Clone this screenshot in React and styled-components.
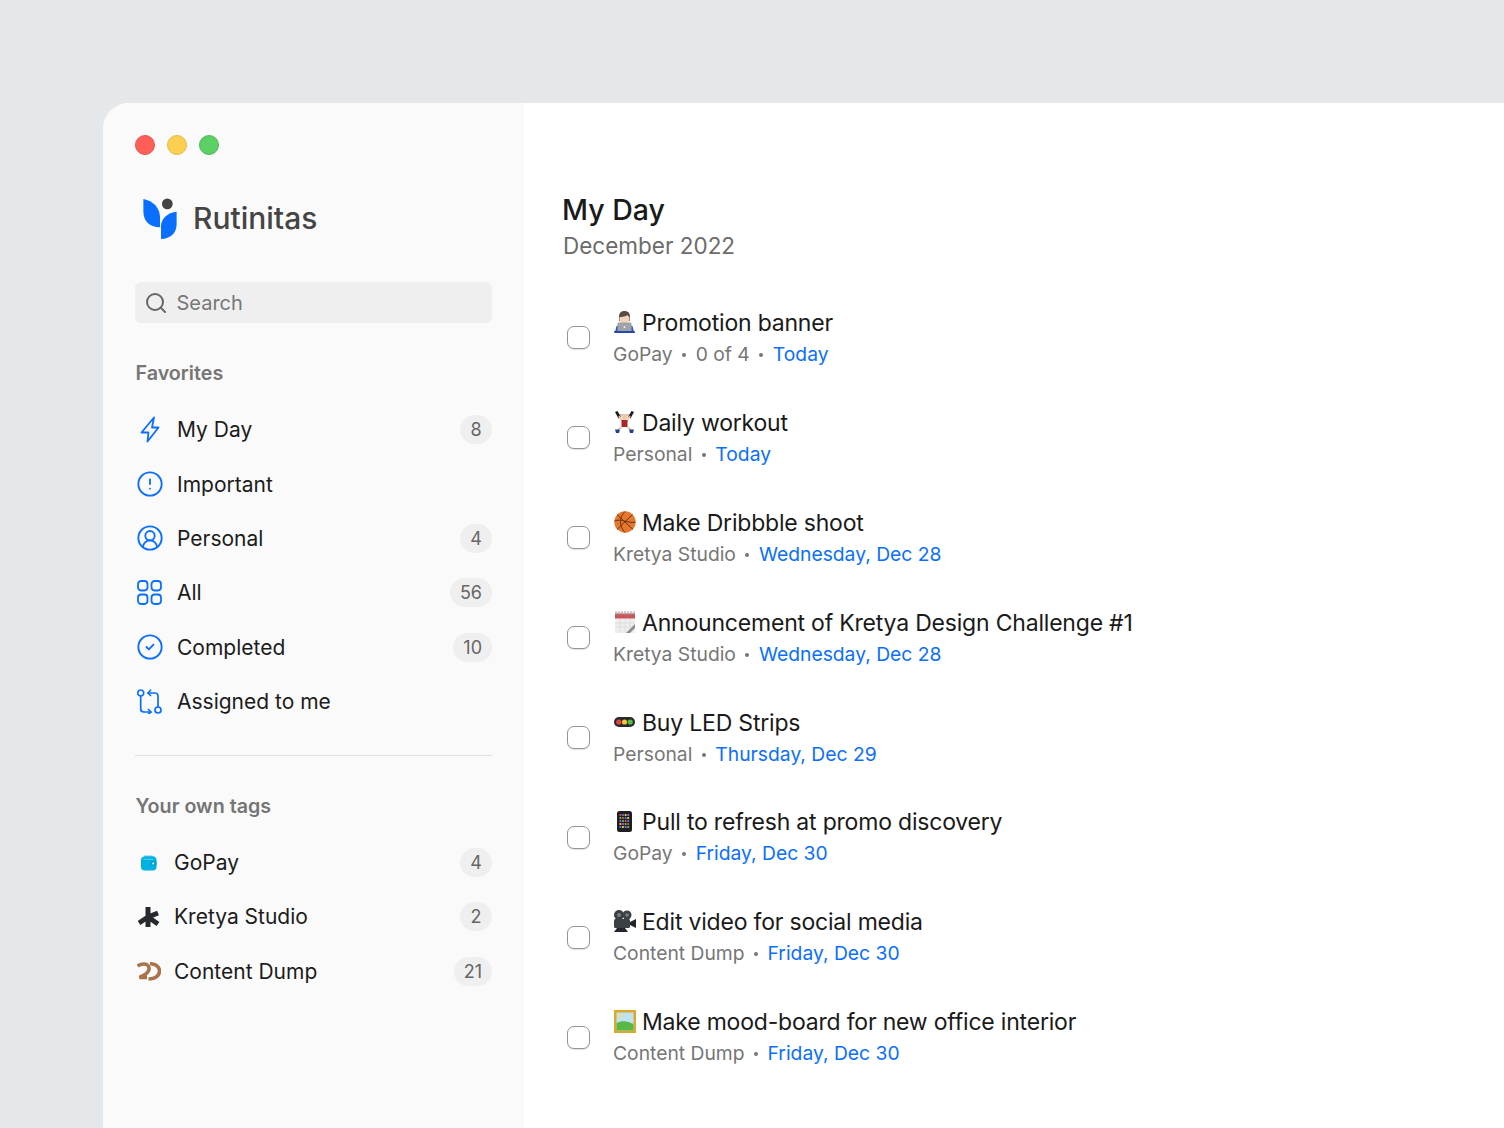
import React from "react";
import styled, { createGlobalStyle } from "styled-components";
import { Search, CircleAlert, CircleUserRound, CircleCheck } from "lucide-react";

const GlobalStyle = createGlobalStyle`
  html, body { margin: 0; padding: 0; }
  body {
    background: #e5e8eb;
    font-family: Inter, "Noto Sans", sans-serif;
    color: #1a1a1a;
    -webkit-font-smoothing: antialiased;
  }
`;

const Page = styled.div`
  width: 1504px;
  height: 1128px;
  overflow: hidden;
  padding: 103px 0 0 103px;
  box-sizing: border-box;
`;

const AppWindow = styled.div`
  display: flex;
  height: 1025px;
  background: #fff;
  border-top-left-radius: 26px;
  overflow: hidden;
`;

const Sidebar = styled.aside`
  width: 421px;
  flex: none;
  background: #fafafa;
  box-sizing: border-box;
  padding: 32px 32px 0 32px;
`;

const Lights = styled.div`
  display: flex;
  gap: 12px;
  height: 20px;
`;

const Light = styled.span`
  width: 20px;
  height: 20px;
  box-sizing: border-box;
  border-radius: 50%;
  background: ${(p) => p.$color};
  border: 1px solid ${(p) => p.$edge};
`;

const Brand = styled.div`
  display: flex;
  align-items: center;
  gap: 16px;
  margin: 40px 0 0 8px;
  height: 46px;
`;

const BrandName = styled.div`
  font-size: 30px;
  font-weight: 500;
  color: #444;
`;

const SearchBox = styled.div`
  display: flex;
  align-items: center;
  gap: 8.5px;
  height: 41px;
  margin-top: 41px;
  padding-left: 9px;
  background: #efefef;
  border-radius: 6px;
  font-size: 20px;
  color: #777;
  svg { color: #666; }
`;

const SectionLabel = styled.div`
  font-size: 19.7px;
  font-weight: 600;
  color: #757575;
  margin-top: ${(p) => p.$top}px;
  line-height: 24px;
  padding-left: 0.5px;
`;

const NavList = styled.div`
  display: flex;
  flex-direction: column;
  margin-top: ${(p) => p.$top}px;
`;

const NavRow = styled.div`
  display: flex;
  align-items: center;
  height: 54.4px;
`;

const NavIcon = styled.span`
  width: 28px;
  margin-right: 13.5px;
  margin-left: 0.5px;
  flex: none;
  display: flex;
  justify-content: center;
  color: #0a6fff;
`;

const TagIcon = styled(NavIcon)`
  width: 26px;
  margin-right: 12.5px;
`;

const NavText = styled.span`
  flex: 1;
  font-size: 21px;
  color: #1c1c1c;
`;

const Count = styled.span`
  min-width: 32px;
  height: 29px;
  padding: 0 10px;
  box-sizing: border-box;
  border-radius: 15px;
  background: #efefef;
  color: #666;
  font-size: 18px;
  display: flex;
  align-items: center;
  justify-content: center;
`;

const Divider = styled.hr`
  border: 0;
  height: 1px;
  background: #dfdfdf;
  margin: 26px 0 0;
`;

const Main = styled.main`
  flex: 1;
  padding: 90px 0 0 39px;
`;

const Title = styled.h1`
  margin: 0 0 0 -1px;
  font-size: 28.5px;
  line-height: 34px;
  font-weight: 500;
  color: #1a1a1a;
`;

const Subtitle = styled.div`
  margin-top: 4px;
  font-size: 22.5px;
  line-height: 30px;
  color: #6b6b6b;
`;

const TaskList = styled.div`
  display: flex;
  flex-direction: column;
  margin-top: 27px;
`;

const Task = styled.div`
  display: flex;
  align-items: center;
  height: 99.9px;
`;

const Box = styled.span`
  width: 23px;
  height: 23px;
  margin: 0 23px 0 4px;
  box-sizing: border-box;
  border: 1.5px solid #959595;
  border-radius: 7px;
  background: #fff;
  box-shadow: 0 1px 1px rgba(0, 0, 0, 0.12);
  flex: none;
`;

const TaskBody = styled.div`
  display: flex;
  flex-direction: column;
  gap: 2px;
`;

const TaskTitle = styled.div`
  display: flex;
  align-items: center;
  gap: 6px;
  font-size: 23px;
  letter-spacing: -0.2px;
  line-height: 30px;
  color: #1a1a1a;
`;

const Meta = styled.div`
  display: flex;
  align-items: center;
  font-size: 19.3px;
  line-height: 28px;
  color: #767676;
`;

const Dot = styled.span`
  width: 4px;
  height: 4px;
  border-radius: 50%;
  background: #767676;
  margin: 2px 9.5px 0;
`;

const Due = styled.span`
  color: #0a6fff;
`;

const EmojiSlot = styled.span`
  width: 23px;
  display: flex;
  justify-content: center;
  margin-top: -2px;
`;

const Logo = () => (
  <svg width="34" height="41" viewBox="0 0 34 42">
    <path d="M0 1C10 3 17 10 17 20V30C7 30 0 24 0 14Z" fill="#0a6fff" />
    <path d="M18 42V29C18 21 25 15 34 14V27C34 36 28 42 18 42Z" fill="#0a6fff" />
    <circle cx="24.5" cy="6" r="5.5" fill="#444" />
  </svg>
);

const BoltIcon = () => (
  <svg width="20" height="27" viewBox="0 0 20 27" fill="none" stroke="currentColor" strokeWidth="1.8" strokeLinejoin="round">
    <path d="M14 1.5L1.5 16.5H8.5L7.5 25.5L18.5 11.5H12Z" />
  </svg>
);

const GridIcon = () => (
  <svg width="25" height="25" viewBox="0 0 25 25" fill="none" stroke="currentColor" strokeWidth="1.8">
    <rect x="1" y="1" width="9.5" height="9.5" rx="3.2" />
    <rect x="14.5" y="1" width="9.5" height="9.5" rx="3.2" />
    <rect x="1" y="14.5" width="9.5" height="9.5" rx="3.2" />
    <rect x="14.5" y="14.5" width="9.5" height="9.5" rx="3.2" />
  </svg>
);

const AssignIcon = () => (
  <svg width="25" height="25" viewBox="0 0 25 25" fill="none" stroke="currentColor" strokeWidth="1.7" strokeLinecap="round" strokeLinejoin="round">
    <circle cx="3.7" cy="4" r="3" />
    <circle cx="21" cy="21" r="3" />
    <path d="M3.7 7V20C3.7 22 5 23 7 23H14" />
    <path d="M11.5 20.5L14 23L11.5 25" />
    <path d="M21 18V7C21 5 19.7 4 18 4H11" />
    <path d="M13.5 1.2L11 4L13.5 6.5" />
  </svg>
);

const WalletIcon = () => (
  <svg width="16" height="16" viewBox="0 0 17 16">
    <path d="M3.5 0H11C13 0 14 1 14 2.5H3Z" fill="#5cc9ea" />
    <rect x="0" y="1" width="16.5" height="15" rx="4" fill="#00b2e3" />
    <path d="M2.5 4H13" stroke="#7fd6ef" strokeWidth="0.8" />
    <rect x="10.5" y="6" width="6" height="5" rx="1.5" fill="#009fcf" />
    <circle cx="13" cy="8.5" r="1" fill="#fff" />
  </svg>
);

const StudioIcon = () => (
  <svg width="22" height="22" viewBox="0 0 22 22" fill="none" stroke="#262a2e" strokeWidth="5">
    <path d="M10 1V21M10 11L1 17M10 11L20 7M10 11L20 18" />
  </svg>
);

const DumpIcon = () => (
  <svg width="24" height="19" viewBox="0 0 24 19" fill="none" stroke="#a9734c" strokeWidth="3.6">
    <path d="M0.5 4C2.5 2.5 5 2 7 2C10.5 2 12.5 4.5 12 7.5C11.5 11 7 13.5 2.5 15.5H10" />
    <path d="M13 1.8C19 1.5 22.5 5 22.5 9C22.5 13.5 18.5 17 11.5 17" />
  </svg>
);

const LaptopEmoji = () => (
  <svg width="21" height="22" viewBox="0 0 21 22">
    <path d="M5 6C5 2 7 0 10.5 0C14 0 16 2 16 6V10H5Z" fill="#5a4a42" />
    <path d="M5.5 6C8 6 12 5.5 13.5 4C14 5 15 6 15.5 6V8.5C15.5 11.5 13 13 10.5 13C8 13 5.5 11.5 5.5 8.5Z" fill="#f3d3bd" />
    <path d="M1 21L2.5 15C5 13.5 16 13.5 18.5 15L20 21Z" fill="#3056c9" />
    <rect x="3.5" y="11.5" width="14" height="9.5" rx="1" fill="#9fa3a8" />
    <rect x="0" y="20" width="21" height="2" rx="1" fill="#2747ad" />
    <circle cx="10.5" cy="16" r="1" fill="#eee" />
  </svg>
);

const WorkoutEmoji = () => (
  <svg width="21" height="22" viewBox="0 0 21 22">
    <path d="M4 4L17 4" stroke="#888" strokeWidth="1" />
    <path d="M1 1L3.5 0L7 6L4.5 7.5ZM20 1L17.5 0L14 6L16.5 7.5Z" fill="#1d1d1d" />
    <circle cx="10.5" cy="6" r="3" fill="#f0c6a4" />
    <path d="M5 5L8 10H13L16 5" stroke="#f0c6a4" strokeWidth="1.6" fill="none" />
    <rect x="7.5" y="9" width="6" height="7" fill="#a8262b" />
    <path d="M8 16L4 18.5M13 16L17 18.5" stroke="#f0c6a4" strokeWidth="2" />
    <path d="M1 18.5H6L5 22H2ZM15 18.5H20L19 22H16Z" fill="#24408c" />
  </svg>
);

const BallEmoji = () => (
  <svg width="22" height="22" viewBox="0 0 22 22" fill="none">
    <circle cx="11" cy="11" r="10.7" fill="#e4782c" />
    <g stroke="#6e3414" strokeWidth="1">
      <path d="M3 3.5L19 18.5M18.5 3.5L3 18.5" />
      <path d="M11 .5C5 6 5 15 11 21.5M.5 10C7 7 15 13 21.5 11" />
    </g>
  </svg>
);

const CalendarEmoji = () => (
  <svg width="20" height="22" viewBox="0 0 20 22">
    <rect x="0" y="1" width="20" height="21" fill="#eeeeee" />
    <rect x="0" y="2.5" width="20" height="5" fill="#c8575b" />
    <path d="M1 0V4M4 0V4M7 0V4M10 0V4M13 0V4M16 0V4M19 0V4" stroke="#a5a5a5" strokeWidth="1" />
    <path d="M0 12H20M0 16H20M5 8V22M10 8V22M15 8V22" stroke="#dedede" strokeWidth="1" />
    <path d="M11 22L20 13V17L15 22Z" fill="#8d8d8d" />
  </svg>
);

const LedEmoji = () => (
  <svg width="21" height="10" viewBox="0 0 21 10">
    <rect x="0" y="0" width="21" height="10" rx="5" fill="#2a2a2a" />
    <circle cx="4.8" cy="5" r="2.6" fill="#e9453f" />
    <circle cx="10.5" cy="5" r="2.6" fill="#f4c431" />
    <circle cx="16.2" cy="5" r="2.6" fill="#52c146" />
  </svg>
);

const PhoneEmoji = () => {
  const colors = ["#e9453f", "#f4c431", "#52c146", "#3b82f6", "#a855f7"];
  return (
    <svg width="15" height="21" viewBox="0 0 15 21">
      <rect x="0" y="0" width="15" height="21" rx="2.5" fill="#1f1f1f" />
      {Array.from({ length: 20 }).map((_, i) => (
        <rect
          key={i}
          x={2.5 + (i % 4) * 2.6}
          y={3 + Math.floor(i / 4) * 3}
          width="1.8"
          height="2"
          fill={colors[(i * 3) % 5]}
        />
      ))}
    </svg>
  );
};

const CameraEmoji = () => (
  <svg width="23" height="22" viewBox="0 0 23 22" fill="#3b4045">
    <circle cx="6" cy="5" r="5" />
    <circle cx="14" cy="5" r="4.5" />
    <circle cx="6" cy="5" r="2" fill="#7b8085" />
    <circle cx="14" cy="5" r="1.8" fill="#7b8085" />
    <rect x="1" y="9" width="16" height="9" rx="1.5" />
    <path d="M17 12L23 9V18L17 15Z" fill="#23272b" />
    <path d="M4 18L1 22H15L12 18Z" fill="#23272b" />
  </svg>
);

const PictureEmoji = () => (
  <svg width="22" height="23" viewBox="0 0 22 23">
    <rect x="0" y="0" width="22" height="23" fill="#dca928" />
    <rect x="2.5" y="2.5" width="17" height="18" fill="#bfe3f5" />
    <path d="M2.5 13C8 10 14 11 19.5 14V20.5H2.5Z" fill="#58b947" />
    <circle cx="6" cy="6" r="1.8" fill="#f7e26b" />
  </svg>
);

const nav = [
  { icon: <BoltIcon />, label: "My Day", count: 8 },
  { icon: <CircleAlert size={28} strokeWidth={1.6} />, label: "Important" },
  { icon: <CircleUserRound size={28} strokeWidth={1.6} />, label: "Personal", count: 4 },
  { icon: <GridIcon />, label: "All", count: 56 },
  { icon: <CircleCheck size={28} strokeWidth={1.6} />, label: "Completed", count: 10 },
  { icon: <AssignIcon />, label: "Assigned to me" },
];

const tags = [
  { icon: <WalletIcon />, label: "GoPay", count: 4 },
  { icon: <StudioIcon />, label: "Kretya Studio", count: 2 },
  { icon: <DumpIcon />, label: "Content Dump", count: 21 },
];

const tasks = [
  { emoji: <LaptopEmoji />, title: "Promotion banner", meta: ["GoPay", "0 of 4"], due: "Today" },
  { emoji: <WorkoutEmoji />, title: "Daily workout", meta: ["Personal"], due: "Today" },
  { emoji: <BallEmoji />, title: "Make Dribbble shoot", meta: ["Kretya Studio"], due: "Wednesday, Dec 28" },
  { emoji: <CalendarEmoji />, title: "Announcement of Kretya Design Challenge #1", meta: ["Kretya Studio"], due: "Wednesday, Dec 28" },
  { emoji: <LedEmoji />, title: "Buy LED Strips", meta: ["Personal"], due: "Thursday, Dec 29" },
  { emoji: <PhoneEmoji />, title: "Pull to refresh at promo discovery", meta: ["GoPay"], due: "Friday, Dec 30" },
  { emoji: <CameraEmoji />, title: "Edit video for social media", meta: ["Content Dump"], due: "Friday, Dec 30" },
  { emoji: <PictureEmoji />, title: "Make mood-board for new office interior", meta: ["Content Dump"], due: "Friday, Dec 30" },
];

const App = () => {
  return (
    <Page>
      <GlobalStyle />
      <AppWindow>
        <Sidebar>
          <Lights>
            <Light $color="#ff5f57" $edge="#e5524b" />
            <Light $color="#fdcf51" $edge="#e6b945" />
            <Light $color="#5ccf65" $edge="#50b958" />
          </Lights>
          <Brand>
            <Logo />
            <BrandName>Rutinitas</BrandName>
          </Brand>
          <SearchBox>
            <Search size={24} strokeWidth={2} />
            Search
          </SearchBox>
          <SectionLabel $top={38}>Favorites</SectionLabel>
          <NavList $top={17.5}>
            {nav.map((item) => (
              <NavRow key={item.label}>
                <NavIcon>{item.icon}</NavIcon>
                <NavText>{item.label}</NavText>
                {item.count && <Count>{item.count}</Count>}
              </NavRow>
            ))}
          </NavList>
          <Divider />
          <SectionLabel $top={38}>Your own tags</SectionLabel>
          <NavList $top={17.5}>
            {tags.map((item) => (
              <NavRow key={item.label}>
                <TagIcon>{item.icon}</TagIcon>
                <NavText>{item.label}</NavText>
                <Count>{item.count}</Count>
              </NavRow>
            ))}
          </NavList>
        </Sidebar>
        <Main>
          <Title>My Day</Title>
          <Subtitle>December 2022</Subtitle>
          <TaskList>
            {tasks.map((task) => (
              <Task key={task.title}>
                <Box />
                <TaskBody>
                  <TaskTitle>
                    <EmojiSlot>{task.emoji}</EmojiSlot>
                    {task.title}
                  </TaskTitle>
                  <Meta>
                    {task.meta.map((m) => (
                      <React.Fragment key={m}>
                        {m}
                        <Dot />
                      </React.Fragment>
                    ))}
                    <Due>{task.due}</Due>
                  </Meta>
                </TaskBody>
              </Task>
            ))}
          </TaskList>
        </Main>
      </AppWindow>
    </Page>
  );
};

export default App;
